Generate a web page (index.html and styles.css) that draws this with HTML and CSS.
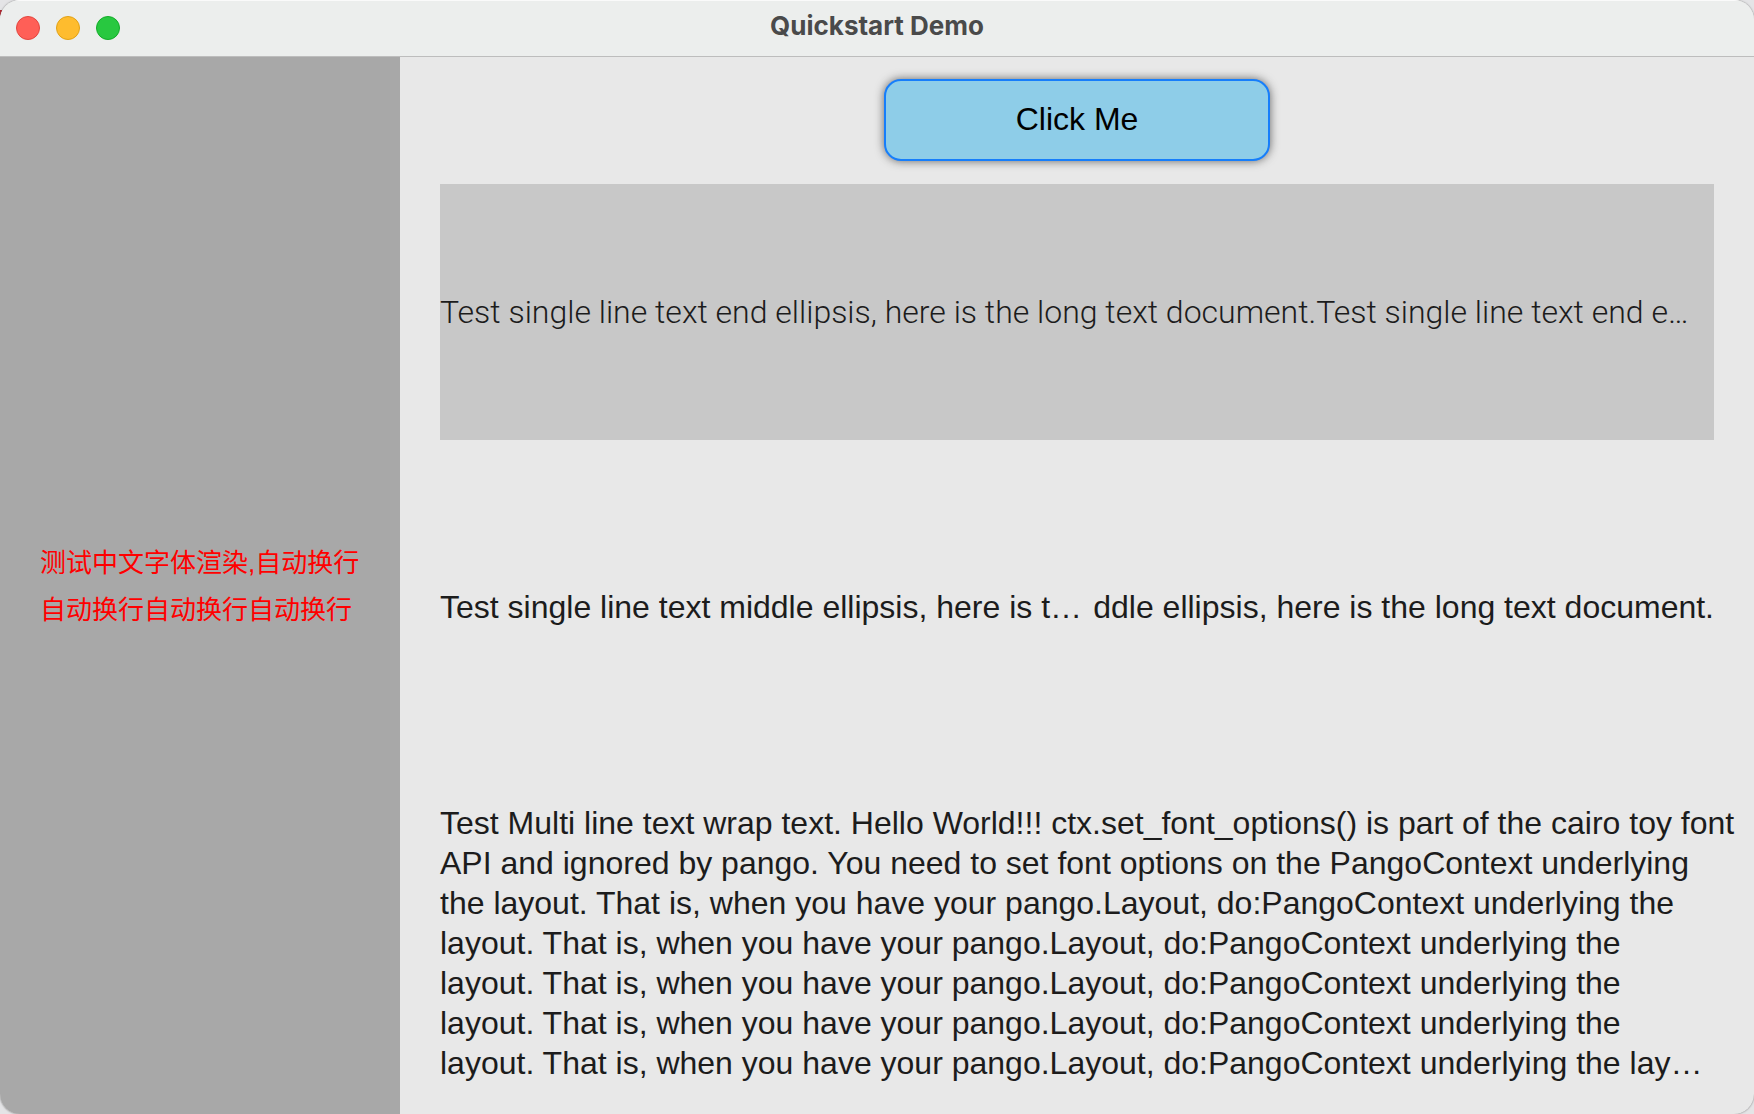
FILE: index.html
```html
<!DOCTYPE html>
<html lang="en">
<head>
<meta charset="utf-8">
<title>Quickstart Demo</title>
<link rel="stylesheet" href="styles.css">
</head>
<body>
<div class="window">
  <header class="titlebar">
    <div class="lights">
      <button class="light close" type="button" aria-label="Close"></button>
      <button class="light minimize" type="button" aria-label="Minimize"></button>
      <button class="light zoom" type="button" aria-label="Zoom"></button>
    </div>
    <h1 class="title">Quickstart Demo</h1>
  </header>
  <div class="content">
    <aside class="sidebar">
      <p class="note" lang="zh-CN">测试中文字体渲染,自动换行自动换行自动换行自动换行</p>
    </aside>
    <main class="main">
      <button class="action" type="button">Click Me</button>
      <section class="panel">
        <p class="end-ellipsis">Test single line text end ellipsis, here is the long text document.Test single line text end e…</p>
      </section>
      <section class="middle">
        <span>Test single line text middle ellipsis, here is t…</span>
        <span>ddle ellipsis, here is the long text document.</span>
      </section>
      <p class="multi">Test Multi line text wrap text. Hello World!!! ctx.set_font_options() is part of the cairo toy font<br>API and ignored by pango. You need to set font options on the PangoContext underlying<br>the layout. That is, when you have your pango.Layout, do:PangoContext underlying the<br>layout. That is, when you have your pango.Layout, do:PangoContext underlying the<br>layout. That is, when you have your pango.Layout, do:PangoContext underlying the<br>layout. That is, when you have your pango.Layout, do:PangoContext underlying the<br>layout. That is, when you have your pango.Layout, do:PangoContext underlying the lay…</p>
    </main>
  </div>
</div>
</body>
</html>
```
FILE: styles.css
```css
* {
  box-sizing: border-box;
}

body {
  margin: 0;
  background: linear-gradient(#b3202a, #b3202a) 0 10px / 2px 6px no-repeat #e4e4e6;
  color: #1c1c1c;
  font: 32px/40px "Liberation Sans", Arial, sans-serif;
}

h1,
p {
  margin: 0;
}

.window {
  display: flex;
  flex-direction: column;
  min-height: 100vh;
  border-radius: 20px;
  overflow: hidden;
  background: #e8e8e8;
  box-shadow: 0 0 2px #777;
}

.titlebar {
  display: grid;
  grid-template-columns: 1fr auto 1fr;
  align-items: center;
  height: 57px;
  padding: 0 16px 1px;
  border-top: 1px solid #fafafa;
  border-bottom: 1px solid #bdbdbd;
  background: #eceeed;
}

.lights {
  display: flex;
  gap: 16px;
}

.light {
  width: 24px;
  height: 24px;
  padding: 0;
  border: 1px solid;
  border-radius: 50%;
}

.close {
  background: #ff5f57;
  border-color: #e2463f;
}

.minimize {
  background: #febc2e;
  border-color: #e1a116;
}

.zoom {
  background: #28c840;
  border-color: #12ac28;
}

.title {
  color: #4a4a4a;
  font: 700 26px/50px Inter, sans-serif;
  padding-bottom: 4px;
}

.content {
  flex: 1;
  display: flex;
}

.sidebar {
  flex: 0 0 400px;
  display: flex;
  align-items: center;
  padding: 2px 40px 0;
  background: #a8a8a8;
}

.note {
  color: #f00;
  font: 26px/47px "Liberation Sans", "Noto Sans CJK SC", sans-serif;
}

.main {
  flex: 1;
  min-width: 0;
  display: flex;
  flex-direction: column;
  padding: 22px 40px 31px;
}

.action {
  align-self: center;
  width: 386px;
  height: 82px;
  margin-bottom: 23px;
  padding: 0 0 2px;
  border: 2px solid #167efb;
  border-radius: 17px;
  background: #8ecde8;
  box-shadow: 0 0 10px #666;
  color: #000;
  font: inherit;
}

.panel {
  display: flex;
  align-items: center;
  flex: 1 1 0;
  background: #c8c8c8;
}

.end-ellipsis {
  font-family: Roboto, sans-serif;
  font-weight: 300;
  white-space: nowrap;
}

.middle {
  display: flex;
  align-items: center;
  justify-content: space-between;
  flex: 1 1 0;
  margin: 39px 0 68px;
  white-space: nowrap;
}

.multi {
  white-space: nowrap;
}
```
